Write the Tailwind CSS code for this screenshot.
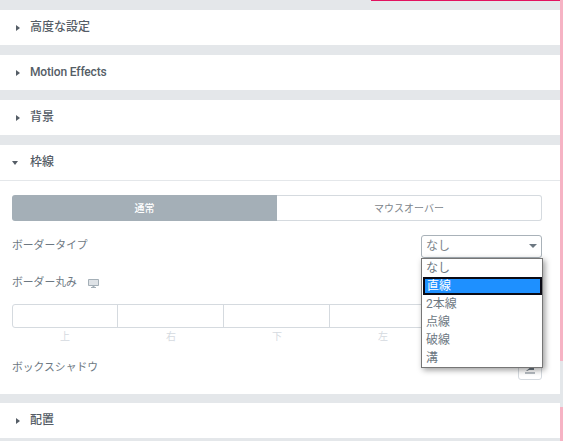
<!DOCTYPE html>
<html lang="ja">
<head>
    <meta charset="UTF-8">
    <title>Elementor panel</title>
    <script src="https://cdn.jsdelivr.net/npm/@tailwindcss/browser@4"></script>
</head>
<body class="w-[563px] h-[441px] overflow-hidden bg-[#e4e7ea] font-['Roboto','Noto_Sans_CJK_JP',sans-serif]">
<div class="flex h-[441px]">
    <!-- panel -->
    <div class="w-[560px] flex flex-col relative">
        <div class="absolute top-0 left-[371px] right-0 h-px bg-[#e2115f]"></div>
        <div class="h-[10px]"></div>

        <div class="h-[35px] bg-white flex items-center pl-[16px] gap-[10px] text-[12px] font-medium text-[#555d66]">
            <svg class="w-[4px] h-[6px]" viewBox="0 0 4 6"><path d="M0 0L4 3L0 6Z" fill="#555d66"/></svg>
            <span class="pb-[2px]">高度な設定</span>
        </div>
        <div class="h-[10px]"></div>
        <div class="h-[35px] bg-white flex items-center pl-[16px] gap-[10px] text-[12px] font-medium text-[#555d66]">
            <svg class="w-[4px] h-[6px]" viewBox="0 0 4 6"><path d="M0 0L4 3L0 6Z" fill="#555d66"/></svg>
            <span class="pb-[2px] tracking-[-0.15px]">Motion Effects</span>
        </div>
        <div class="h-[10px]"></div>
        <div class="h-[35px] bg-white flex items-center pl-[16px] gap-[10px] text-[12px] font-medium text-[#555d66]">
            <svg class="w-[4px] h-[6px]" viewBox="0 0 4 6"><path d="M0 0L4 3L0 6Z" fill="#555d66"/></svg>
            <span class="pb-[2px]">背景</span>
        </div>
        <div class="h-[10px]"></div>

        <!-- open section -->
        <div class="h-[249px] bg-white">
            <div class="h-[36px] border-b border-[#e4e7ea] flex items-center pl-[12px] gap-[12px] text-[12px] font-medium text-[#555d66]">
                <svg class="w-[6px] h-[4px]" viewBox="0 0 6 4"><path d="M0 0H6L3 4Z" fill="#555d66"/></svg>
                <span class="pb-[2px]">枠線</span>
            </div>
            <div class="px-[12px] pt-[14px]">
                <div class="flex w-[530px] h-[26px] text-[10px]">
                    <div class="w-[265px] bg-[#a4afb7] rounded-l-[3px] text-white font-medium flex items-center justify-center">通常</div>
                    <div class="flex-1 border border-l-0 border-[#d5dadf] rounded-r-[3px] text-[#7d858c] flex items-center justify-center">マウスオーバー</div>
                </div>
                <div class="flex items-center justify-between h-[26px] mt-[12px] w-[530px] text-[10.8px] text-[#6d7882]">
                    <span>ボーダータイプ</span>
                    <div class="w-[121px] h-[23px] border border-[#a9b2b9] rounded-[3px] flex items-center justify-between pl-[4px] pr-[4px] text-[12px] text-[#7d858c]">
                        <span>なし</span>
                        <svg class="w-[8px] h-[4px]" viewBox="0 0 8 4"><path d="M0 0H8L4 4Z" fill="#6d7882"/></svg>
                    </div>
                </div>
                <div class="flex items-center gap-[11px] mt-[17px] h-[14px] text-[10.8px] text-[#6d7882]">
                    <span>ボーダー丸み</span>
                    <svg class="w-[11px] h-[9px]" viewBox="0 0 11 9"><path d="M0.5 0.5H10.5V6.5H0.5Z" fill="#dfe3e7" stroke="#a4afb7"/><path d="M4.5 7H6.5V8H8V9H3V8H4.5Z" fill="#a4afb7"/></svg>
                </div>
                <div class="flex w-[530px] h-[24px] mt-[14px] border border-[#d5dadf] rounded-[3px]">
                    <div class="w-[105px] border-r border-[#d5dadf]"></div>
                    <div class="w-[106px] border-r border-[#d5dadf]"></div>
                    <div class="w-[106px] border-r border-[#d5dadf]"></div>
                    <div class="flex-1"></div>
                </div>
                <div class="flex w-[530px] mt-[2px] h-[14px] text-[10px] leading-[14px] text-[#d5dadf] text-center">
                    <span class="w-[106px]">上</span>
                    <span class="w-[106px]">右</span>
                    <span class="w-[106px]">下</span>
                    <span class="w-[106px]">左</span>
                </div>
                <div class="flex items-center justify-between h-[24px] mt-[12px] w-[530px] text-[10.8px] text-[#6d7882]">
                    <span>ボックスシャドウ</span>
                    <div class="w-[24px] h-[24px] border border-[#d5dadf] rounded-[3px] flex items-end justify-center pb-[5px]">
                        <svg class="w-[12px] h-[8px]" viewBox="0 0 12 8"><path d="M2 5L8 0L10 0V4H5L3 5Z" fill="#6d7882"/><path d="M1 6.5H11V7.5H1Z" fill="#6d7882"/></svg>
                    </div>
                </div>
            </div>
        </div>

        <div class="h-[9px]"></div>
        <div class="h-[35px] bg-white flex items-center pl-[16px] gap-[10px] text-[12px] font-medium text-[#555d66]">
            <svg class="w-[4px] h-[6px]" viewBox="0 0 4 6"><path d="M0 0L4 3L0 6Z" fill="#555d66"/></svg>
            <span class="pb-[2px]">配置</span>
        </div>

        <!-- native select list -->
        <div class="absolute left-[421px] top-[258px] w-[122px] h-[110px] bg-white border border-[#767676] shadow-[2px_2px_6px_rgba(0,0,0,0.4)] text-[12px] leading-[18px] text-[#6d7882] pl-[1px]">
            <div class="pl-[3px] h-[18px]">なし</div>
            <div class="pl-[2px] h-[18px] bg-[#1e90ff] border-2 border-[#0a0a14] text-white leading-[14px]">直線</div>
            <div class="pl-[3px] h-[18px]">2本線</div>
            <div class="pl-[3px] h-[18px]">点線</div>
            <div class="pl-[3px] h-[18px]">破線</div>
            <div class="pl-[3px] h-[18px]">溝</div>
        </div>
    </div>
    <!-- page edge -->
    <div class="w-[3px] flex flex-col">
        <div class="h-[361px] bg-[#f6b3c4]"></div>
        <div class="h-[46px] bg-[#e4e7ea]"></div>
        <div class="flex-1 bg-[#f6b3c4]"></div>
    </div>
</div>
</body>
</html>
